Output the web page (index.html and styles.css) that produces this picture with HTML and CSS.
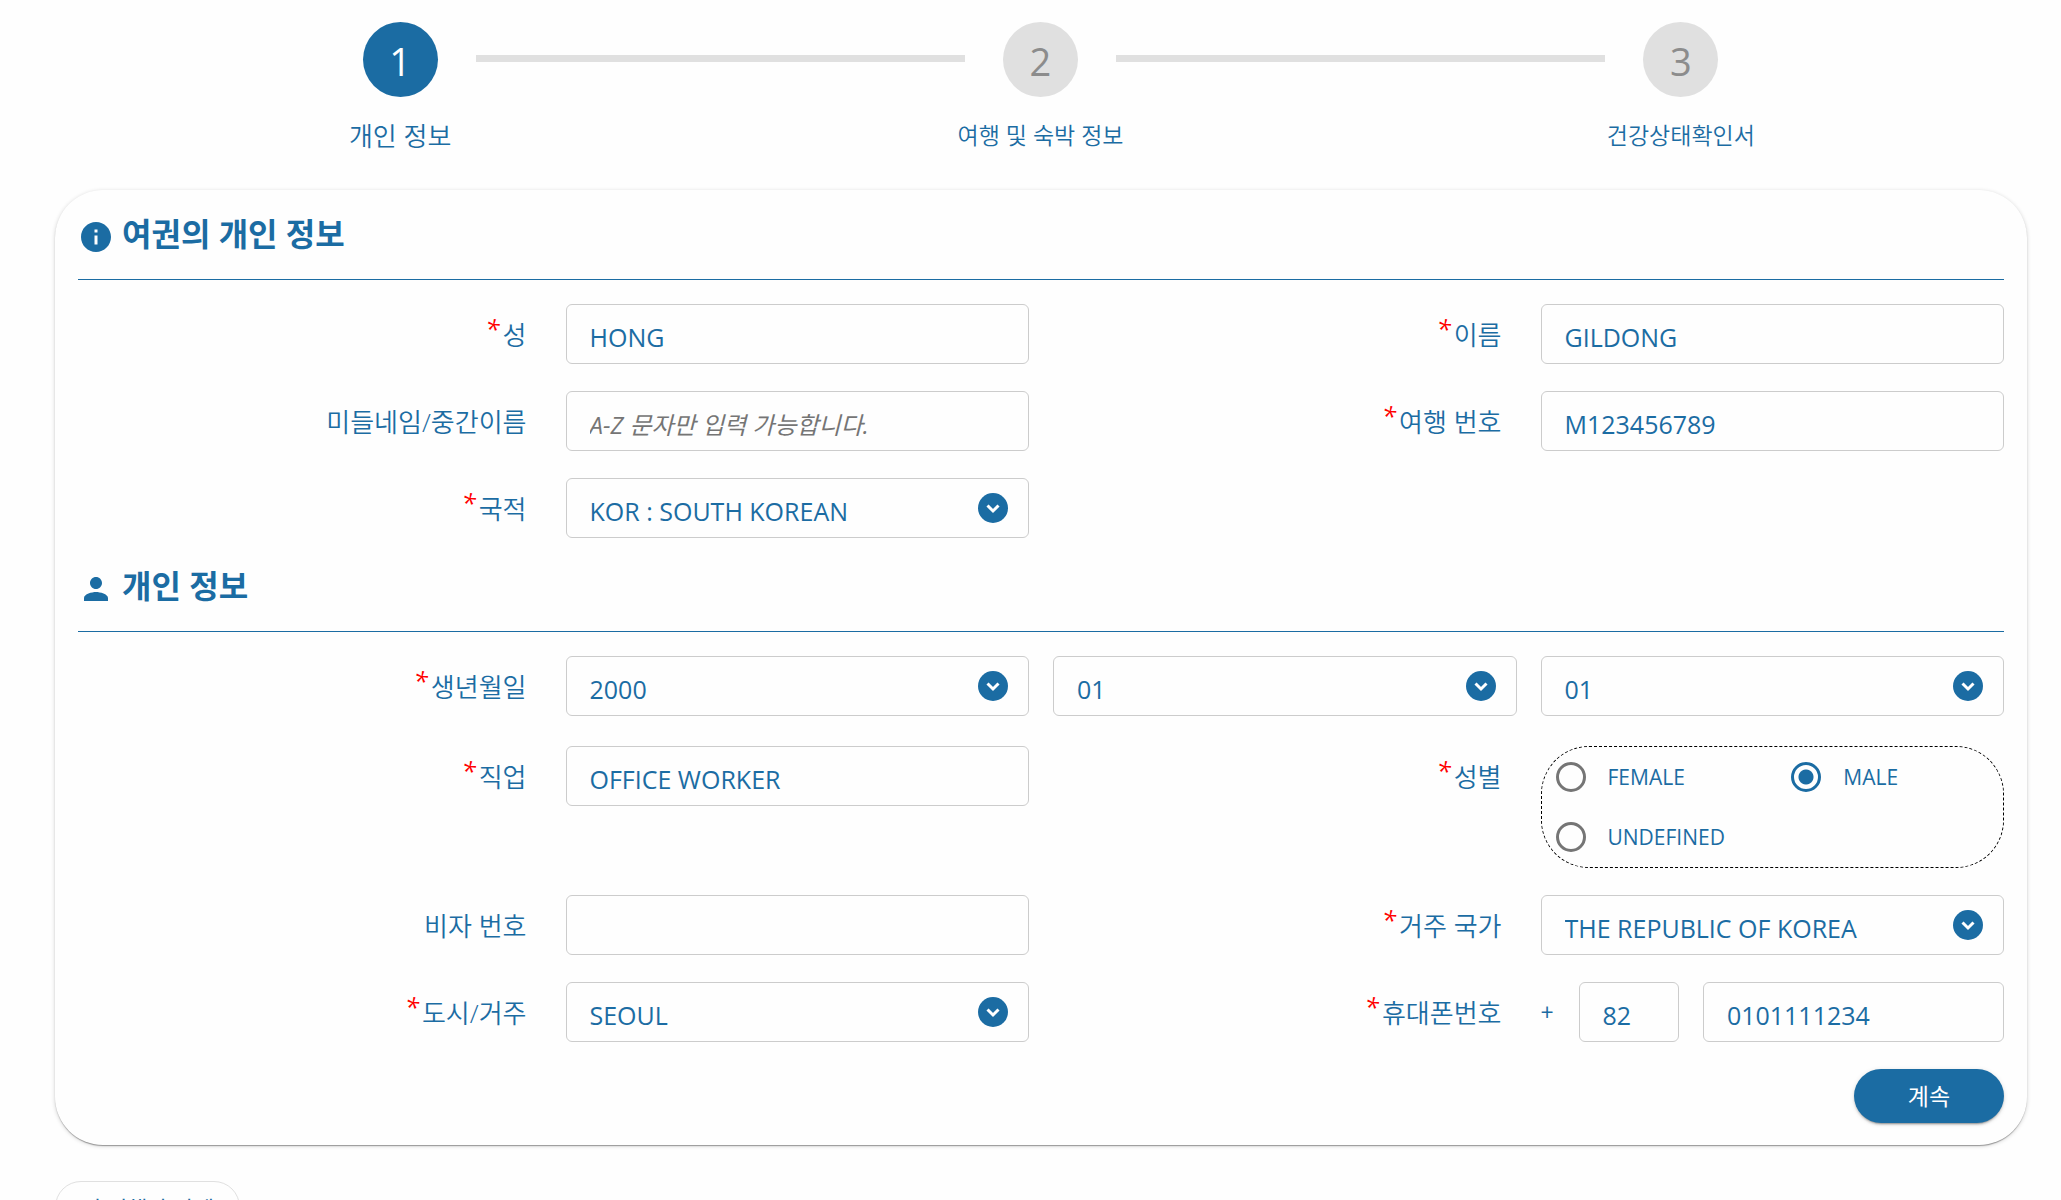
FILE: index.html
```
<!DOCTYPE html>
<html lang="ko">
<head>
  <meta charset="UTF-8">
  <meta name="viewport" content="width=device-width, initial-scale=1">
  <title>개인 정보</title>
  <link rel="stylesheet" href="styles.css">
</head>
<body>

  <!-- Shared icons -->
  <svg class="sprite" aria-hidden="true">
    <symbol id="icon-down" viewBox="0 0 30 30">
      <circle cx="15" cy="15" r="15" fill="#1b6ca3" />
      <path d="M9.500 12.500 15 18l5.500-5.500" fill="none" stroke="#fff" stroke-width="3" />
    </symbol>
  </svg>

  <div class="page">
    <ol class="stepper">
      <li class="step active">
        <span class="step-number">1</span>
        <span class="step-label">개인 정보</span>
      </li>
      <li class="step">
        <span class="step-number">2</span>
        <span class="step-label">여행 및 숙박 정보</span>
      </li>
      <li class="step">
        <span class="step-number">3</span>
        <span class="step-label">건강상태확인서</span>
      </li>
    </ol>

    <form id="personalForm" class="card">
      <h2 class="section-title">
        <svg class="section-icon" viewBox="0 0 24 24" aria-hidden="true"><path d="M12 2C6.480 2 2 6.480 2 12s4.480 10 10 10 10-4.480 10-10S17.520 2 12 2zm1 15h-2v-6h2v6zm0-8h-2V7h2v2z" /></svg>
        여권의 개인 정보
      </h2>

      <div class="form-grid">
        <label class="field-label required" for="familyName">성</label>
        <input class="field" type="text" id="familyName" name="familyName" value="HONG" required>
        <label class="field-label required" for="firstName">이름</label>
        <input class="field" type="text" id="firstName" name="firstName" value="GILDONG" required>

        <label class="field-label" for="middleName">미들네임/중간이름</label>
        <input class="field" type="text" id="middleName" name="middleName" placeholder="A-Z 문자만 입력 가능합니다.">
        <label class="field-label required" for="passportNo">여행 번호</label>
        <input class="field" type="text" id="passportNo" name="passportNo" value="M123456789" required>

        <label class="field-label required" for="nationality">국적</label>
        <div class="select-wrap">
          <select class="field" id="nationality" name="nationality" required>
            <option>KOR : SOUTH KOREAN</option>
          </select>
          <svg class="select-icon" aria-hidden="true"><use href="#icon-down" /></svg>
        </div>
      </div>

      <h2 class="section-title">
        <svg class="section-icon" viewBox="0 0 24 24" aria-hidden="true"><path d="M12 12c2.210 0 4-1.790 4-4s-1.790-4-4-4-4 1.790-4 4 1.790 4 4 4zm0 2c-2.670 0-8 1.340-8 4v2h16v-2c0-2.660-5.330-4-8-4z" /></svg>
        개인 정보
      </h2>

      <div class="form-grid birth-row">
        <label class="field-label required" for="birthYear">생년월일</label>
        <div class="select-wrap">
          <select class="field" id="birthYear" name="birthYear" required>
            <option>2000</option>
          </select>
          <svg class="select-icon" aria-hidden="true"><use href="#icon-down" /></svg>
        </div>
        <div class="select-wrap">
          <select class="field" id="birthMonth" name="birthMonth" aria-label="월" required>
            <option>01</option>
          </select>
          <svg class="select-icon" aria-hidden="true"><use href="#icon-down" /></svg>
        </div>
        <div class="select-wrap">
          <select class="field" id="birthDay" name="birthDay" aria-label="일" required>
            <option>01</option>
          </select>
          <svg class="select-icon" aria-hidden="true"><use href="#icon-down" /></svg>
        </div>
      </div>

      <div class="form-grid">
        <label class="field-label required" for="occupation">직업</label>
        <input class="field" type="text" id="occupation" name="occupation" value="OFFICE WORKER" required>
        <span class="field-label required" id="genderLabel">성별</span>
        <div class="radio-group" role="radiogroup" aria-labelledby="genderLabel">
          <label class="radio"><input type="radio" name="gender" value="female">FEMALE</label>
          <label class="radio"><input type="radio" name="gender" value="male" checked>MALE</label>
          <label class="radio"><input type="radio" name="gender" value="undefined">UNDEFINED</label>
        </div>

        <label class="field-label" for="visaNo">비자 번호</label>
        <input class="field" type="text" id="visaNo" name="visaNo">
        <label class="field-label required" for="country">거주 국가</label>
        <div class="select-wrap">
          <select class="field" id="country" name="country" required>
            <option>THE REPUBLIC OF KOREA</option>
          </select>
          <svg class="select-icon" aria-hidden="true"><use href="#icon-down" /></svg>
        </div>

        <label class="field-label required" for="city">도시/거주</label>
        <div class="select-wrap">
          <select class="field" id="city" name="city" required>
            <option>SEOUL</option>
          </select>
          <svg class="select-icon" aria-hidden="true"><use href="#icon-down" /></svg>
        </div>
        <label class="field-label required" for="mobileNo">휴대폰번호</label>
        <div class="phone">
          <span class="plus">+</span>
          <input class="field" type="text" name="mobileCode" value="82" aria-label="국가 번호">
          <input class="field" type="tel" id="mobileNo" name="mobileNo" value="0101111234" required>
        </div>
      </div>

      <div class="actions">
        <button type="submit" class="submit-btn">계속</button>
      </div>
    </form>

    <button type="button" class="delete-btn">이 여행자 삭제</button>
  </div>

</body>
</html>
```
FILE: styles.css
```
* {
  box-sizing: border-box;
}

body {
  font-family: 'Open Sans', 'Noto Sans CJK KR', sans-serif;
  font-size: 25px;
  background-color: #fefefe;
  margin: 0;
  color: #1b6ca3;
}

.sprite {
  display: none;
}

.page {
  margin: 0 34px 0 55px;
}

/* Stepper */
.stepper {
  display: grid;
  grid-template-columns: repeat(3, 1fr);
  list-style: none;
  margin: 0 26px 0 25px;
  padding: 22px 0 0;
  height: 190px;
}

.step {
  display: grid;
  grid-template-columns: 1fr auto 1fr;
  grid-template-rows: 75px 40px;
  column-gap: 38px;
  row-gap: 18px;
}

.step::before,
.step::after {
  content: "";
  grid-row: 1;
  height: 7px;
  margin-top: 33px;
  background-color: #e0e0e0;
}

.step::before {
  grid-column: 1;
}

.step::after {
  grid-column: 3;
}

.step:first-child::before,
.step:last-child::after {
  visibility: hidden;
}

.step-number {
  grid-row: 1;
  grid-column: 2;
  width: 75px;
  height: 75px;
  border-radius: 50%;
  background-color: #e0e0e0;
  color: #8c8c8c;
  font-size: 38px;
  line-height: 78px;
  text-align: center;
}

.step-label {
  grid-row: 2;
  grid-column: 1 / -1;
  font-size: 23px;
  font-weight: 350;
  line-height: 40px;
  text-align: center;
}

.step.active .step-number {
  background-color: #1b6ca3;
  color: #fff;
}

.step.active .step-label {
  font-size: 26px;
  line-height: 42px;
}

/* Form card */
.card {
  padding: 24px 23px 22px;
  background-color: #fefefe;
  border-radius: 48px;
  box-shadow: 0 2px 1px -1px rgba(0, 0, 0, 0.2), 0 1px 1px rgba(0, 0, 0, 0.16), 0 1px 4px rgba(0, 0, 0, 0.18);
}

.section-title {
  display: flex;
  gap: 8px;
  height: 66px;
  margin: 0 0 24px;
  border-bottom: 1px solid #1b6ca3;
  font-size: 32px;
  font-weight: 600;
  line-height: 40px;
}

.form-grid + .section-title {
  margin-top: 28px;
}

.section-icon {
  width: 36px;
  height: 36px;
  margin-top: 5px;
  fill: #1b6ca3;
}

.form-grid {
  display: grid;
  grid-template-columns: repeat(4, minmax(0, 1fr));
  gap: 27px 24px;
}

.birth-row {
  margin-bottom: 30px;
}

.field-label {
  padding-right: 15px;
  font-size: 26px;
  font-weight: 350;
  line-height: 62px;
  height: 60px;
  text-align: right;
}

.required::before {
  content: "*";
  margin-right: 3px;
  color: #f00;
  font-size: 26px;
  font-style: italic;
  font-weight: 500;
  line-height: 1;
  vertical-align: 6px;
}

.field {
  width: 100%;
  height: 60px;
  padding: 5px 23px 0;
  border: 1px solid #ccc;
  border-radius: 6px;
  background-color: #fefefe;
  color: #1b6ca3;
  font-family: inherit;
  font-size: 25px;
  outline: none;
}

.field::placeholder {
  color: #757575;
  font-size: 24px;
  font-style: italic;
}

select.field {
  appearance: none;
}

.select-wrap {
  position: relative;
}

.select-icon {
  position: absolute;
  top: 15px;
  right: 21px;
  width: 30px;
  height: 30px;
  pointer-events: none;
}

.radio-group {
  display: grid;
  grid-template-columns: 1fr 1fr;
  column-gap: 24px;
  padding: 0 0 0 14px;
  border: 1px dashed #000;
  border-radius: 48px;
}

.radio {
  display: flex;
  align-items: center;
  gap: 22px;
  height: 60px;
  font-size: 21px;
}

.radio input {
  appearance: none;
  width: 30px;
  height: 30px;
  margin: 0;
  border: 3px solid #757575;
  border-radius: 50%;
}

.radio input:checked {
  border-color: #1b6ca3;
  background: radial-gradient(circle, #1b6ca3 7px, #fefefe 8px);
}

.phone {
  display: grid;
  grid-template-columns: 14px 1fr 3fr;
  gap: 24px;
}

.plus {
  font-size: 23px;
  line-height: 60px;
}

.actions {
  display: flex;
  justify-content: flex-end;
  margin-top: 27px;
}

.submit-btn {
  width: 150px;
  height: 54px;
  padding-bottom: 4px;
  border: none;
  border-radius: 27px;
  background-color: #1b6ca3;
  box-shadow: 0 3px 1px -2px rgba(0, 0, 0, 0.2), 0 2px 2px rgba(0, 0, 0, 0.14), 0 1px 5px rgba(0, 0, 0, 0.12);
  color: #fff;
  font-family: inherit;
  font-size: 23px;
  cursor: pointer;
}

.delete-btn {
  height: 52px;
  margin-top: 36px;
  padding: 0 25px;
  border: 1px solid #e0e0e0;
  border-radius: 26px;
  background-color: #fefefe;
  color: #1b6ca3;
  font-family: inherit;
  font-size: 22px;
  cursor: pointer;
}

@media (max-width: 1000px) {
  .page {
    margin: 0 12px;
  }

  .form-grid {
    grid-template-columns: 1fr;
    gap: 12px;
  }

  .field-label {
    text-align: left;
  }
}
```
